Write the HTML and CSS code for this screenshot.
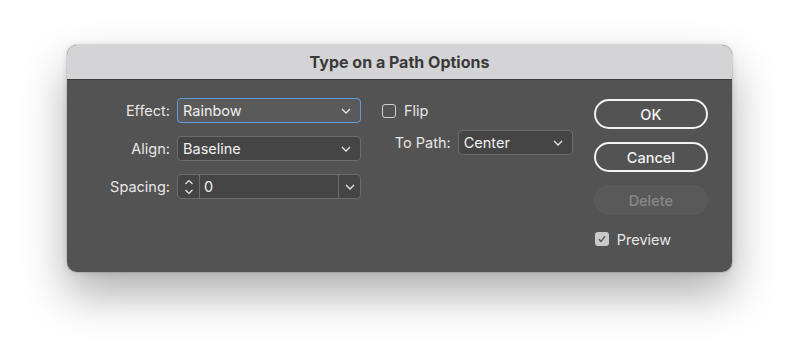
FILE: index.html
```html
<!DOCTYPE html>
<html lang="en">
<head>
    <meta charset="UTF-8">
    <meta name="viewport" content="width=device-width, initial-scale=1.0">
    <title>Type on a Path Options</title>
    <link rel="stylesheet" href="styles.css">
</head>
<body>
    <div class="dialog">
        <div class="title-bar">Type on a Path Options</div>
        <div class="dialog-body">
            <div class="form-grid">
                <label class="field-label">Effect:</label>
                <div class="select focused">
                    <span class="select-value">Rainbow</span>
                    <svg class="chevron" width="10" height="6" viewBox="0 0 10 6"><path d="M1 1l4 4 4-4" fill="none" stroke="#e6e6e6" stroke-width="1.3"/></svg>
                </div>

                <label class="field-label">Align:</label>
                <div class="select dark">
                    <span class="select-value">Baseline</span>
                    <svg class="chevron" width="10" height="6" viewBox="0 0 10 6"><path d="M1 1l4 4 4-4" fill="none" stroke="#e6e6e6" stroke-width="1.3"/></svg>
                </div>

                <label class="field-label">Spacing:</label>
                <div class="combo">
                    <div class="stepper">
                        <svg width="10" height="18" viewBox="0 0 10 18"><path d="M1.5 6l3.5-3.5 3.5 3.5M1.5 12l3.5 3.5 3.5-3.5" fill="none" stroke="#e6e6e6" stroke-width="1.2"/></svg>
                    </div>
                    <span class="combo-value">0</span>
                    <div class="combo-arrow">
                        <svg width="10" height="6" viewBox="0 0 10 6"><path d="M1 1l4 4 4-4" fill="none" stroke="#e6e6e6" stroke-width="1.3"/></svg>
                    </div>
                </div>
            </div>

            <div class="middle-col">
                <div class="check-row">
                    <span class="checkbox"></span>
                    <span>Flip</span>
                </div>
                <div class="path-row">
                    <label class="field-label">To Path:</label>
                    <div class="select dark small">
                        <span class="select-value">Center</span>
                        <svg class="chevron" width="10" height="6" viewBox="0 0 10 6"><path d="M1 1l4 4 4-4" fill="none" stroke="#e6e6e6" stroke-width="1.3"/></svg>
                    </div>
                </div>
            </div>

            <div class="button-col">
                <button class="btn">OK</button>
                <button class="btn">Cancel</button>
                <button class="btn disabled">Delete</button>
                <div class="check-row preview">
                    <span class="checkbox checked">
                        <svg width="10" height="10" viewBox="0 0 10 10"><path d="M2 5.2l2 2.2 4-5" fill="none" stroke="#555" stroke-width="1.5"/></svg>
                    </span>
                    <span>Preview</span>
                </div>
            </div>
        </div>
    </div>
</body>
</html>
```

FILE: styles.css
```css
html, body {
    min-height: 362px;
}
body {
    margin: 0;
    padding: 45px 0 0 67px;
    box-sizing: border-box;
    background-color: #ffffff;
    font-family: Inter, Roboto, "Noto Sans", sans-serif;
    font-size: 14.5px;
    color: #e8e8e8;
}
.dialog {
    width: 665px;
    border-radius: 10px;
    overflow: hidden;
    background-color: #535353;
    box-shadow: 0 22px 45px rgba(0, 0, 0, 0.32), 0 0 6px rgba(0, 0, 0, 0.12), 0 0 0 1px rgba(0, 0, 0, 0.08);
}
.title-bar {
    height: 34px;
    line-height: 34px;
    background-color: #d4d4d6;
    border-bottom: 1px solid #3c3c3c;
    text-align: center;
    font-weight: 700;
    font-size: 16px;
    color: #3a3a3a;
}
.dialog-body {
    display: flex;
    gap: 21px;
    padding: 18px 24px 22px 40px;
    height: 152px;
}
.form-grid {
    display: grid;
    grid-template-columns: 63px 184px;
    column-gap: 7px;
    row-gap: 13px;
    align-items: center;
    align-content: start;
}
.field-label {
    text-align: right;
    color: #e6e6e6;
    white-space: nowrap;
}
.select {
    box-sizing: border-box;
    height: 25px;
    display: flex;
    align-items: center;
    justify-content: space-between;
    padding: 0 9px 0 5px;
    border: 1px solid #6c6c6c;
    border-radius: 4px;
    background-color: #585858;
    color: #f0f0f0;
}
.select.focused {
    border-color: #5f9be0;
    background-color: #5a5a5a;
}
.select.dark {
    background-color: #454545;
}
.select.small {
    width: 115px;
    flex-shrink: 0;
}
.combo {
    box-sizing: border-box;
    height: 25px;
    display: flex;
    border: 1px solid #6c6c6c;
    border-radius: 4px;
    background-color: #454545;
}
.stepper {
    width: 21px;
    display: flex;
    align-items: center;
    justify-content: center;
    border-right: 1px solid #6c6c6c;
}
.combo-value {
    flex: 1;
    padding-left: 4px;
    line-height: 23px;
    color: #f0f0f0;
}
.combo-arrow {
    width: 21px;
    display: flex;
    align-items: center;
    justify-content: center;
    border-left: 1px solid #6c6c6c;
}
.middle-col {
    width: 192px;
    display: flex;
    flex-direction: column;
    gap: 7px;
}
.check-row {
    height: 25px;
    display: flex;
    align-items: center;
    gap: 8px;
    color: #e6e6e6;
}
.checkbox {
    box-sizing: border-box;
    width: 14px;
    height: 14px;
    border: 1px solid #cfcfcf;
    border-radius: 3px;
    display: flex;
    align-items: center;
    justify-content: center;
}
.checkbox.checked {
    border: none;
    background-color: #c9c9c9;
}
.path-row {
    display: flex;
    align-items: center;
    justify-content: flex-end;
    gap: 7px;
}
.button-col {
    width: 115px;
    display: flex;
    flex-direction: column;
    gap: 13px;
    padding-top: 1px;
}
.btn {
    box-sizing: border-box;
    height: 30px;
    flex-shrink: 0;
    border: 2px solid #f2f2f2;
    border-radius: 15px;
    background: none;
    color: #f4f4f4;
    font-family: inherit;
    font-size: 14.5px;
    font-weight: 500;
}
.btn.disabled {
    border-color: #5a5a5a;
    background-color: #595959;
    color: #888;
}
.check-row.preview {
    padding-left: 1px;
}
```
